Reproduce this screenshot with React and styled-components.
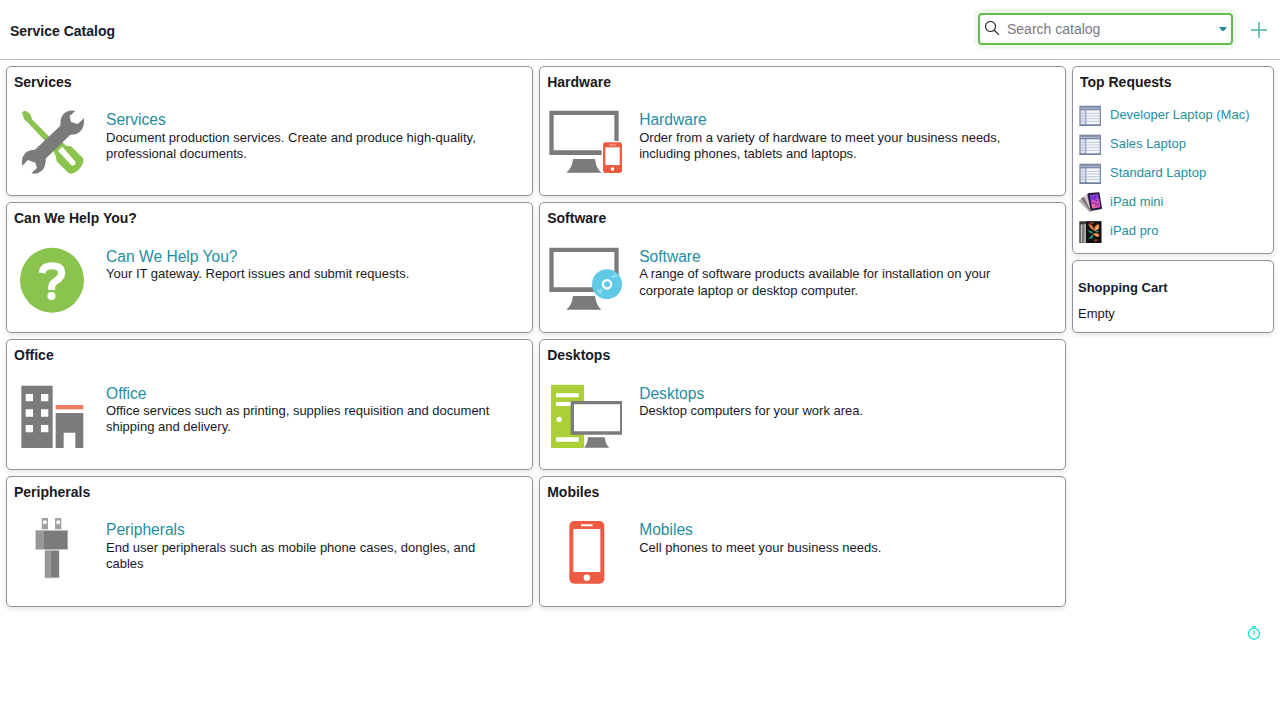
import React from 'react';
import styled, { createGlobalStyle } from 'styled-components';

const GlobalStyle = createGlobalStyle`
  * { box-sizing: border-box; }
  body {
    margin: 0;
    background: #fff;
    color: #181a1f;
    font-family: "Liberation Sans", Arial, sans-serif;
    font-size: 13px;
    overflow: hidden;
  }
`;

const Page = styled.div`
  width: 1280px;
  height: 718px;
`;

const Header = styled.header`
  display: flex;
  align-items: center;
  justify-content: space-between;
  height: 60px;
  padding: 0 12px 2px 10px;
  border-bottom: 1px solid #b9b9bb;
`;

const PageTitle = styled.h1`
  margin: 0;
  padding-top: 4px;
  font-size: 14px;
  line-height: 18px;
`;

const HeaderTools = styled.div`
  display: flex;
  align-items: center;
  gap: 17px;
`;

const SearchField = styled.label`
  display: flex;
  align-items: center;
  width: 255px;
  height: 32px;
  padding: 0 4px 0 5px;
  border: 2px solid #65bd4f;
  border-radius: 4px;
  box-shadow: 0 0 0 4px #f0f9ee;
`;

const SearchInput = styled.input`
  flex: 1;
  min-width: 0;
  margin: 0 0 0 7px;
  padding: 0;
  border: 0;
  outline: 0;
  background: transparent;
  font: 14px "Liberation Sans", Arial, sans-serif;
  color: #181a1f;
  &::placeholder { color: #777984; opacity: 1; }
`;

const SearchGlyph = styled.svg`
  width: 15px;
  height: 16px;
`;

const AddGlyph = styled.svg`
  width: 18px;
  height: 18px;
  margin-top: 2px;
`;

const Columns = styled.main`
  display: grid;
  grid-template-columns: 1060px 202px;
  align-items: start;
  gap: 6px;
  padding: 5.8px 6px;
`;

const Catalog = styled.div`
  display: grid;
  grid-template-columns: 527.2px 526.8px;
  grid-template-rows: repeat(4, 130.69px);
  gap: 6px;
`;

const Sidebar = styled.aside`
  display: grid;
  grid-template-rows: 188px 73px;
  gap: 6px;
`;

const Card = styled.section`
  border: 1px solid #8f92a1;
  border-radius: 5px;
  background: #fff;
  box-shadow: 0 2px 5px rgba(24, 26, 31, 0.12);
`;

const CardTitle = styled.h2`
  margin: 0;
  padding: 6px 7px 0;
  font-size: 14px;
  line-height: 18px;
`;

const CardBody = styled.div`
  display: flex;
  gap: 8px;
  padding: 15px 7px 0;
`;

const CategoryIcon = styled.svg`
  flex: none;
  width: 84px;
  height: 80px;
`;

const CategoryText = styled.div`
  width: 400px;
  padding-top: 4.4px;
`;

const Link = styled.a`
  display: block;
  color: #278ea0;
  text-decoration: none;
  font-size: ${(p) => (p.$large ? '15.6px' : '13px')};
  line-height: ${(p) => (p.$large ? '19.5px' : '18px')};
`;

const Description = styled.p`
  margin: 0.1px 0 0;
  line-height: 16.25px;
`;

const RequestList = styled.ul`
  margin: 0;
  padding: 12px 0 0 5px;
  list-style: none;
`;

const Request = styled.li`
  display: flex;
  gap: 7px;
  height: 29px;
`;

const Thumb = styled.svg`
  flex: none;
  width: 25px;
  height: 25px;
`;

const RequestLabel = styled.div`
  padding-top: 3px;
`;

const CartTitle = styled.h3`
  margin: 19px 5px 0;
  font-size: 13px;
  line-height: 16px;
`;

const CartText = styled.p`
  margin: 10px 5px 0;
  line-height: 16px;
`;

const TimerButton = styled.svg`
  position: fixed;
  left: 1247px;
  top: 625px;
  width: 14px;
  height: 16px;
`;

const gray = '#7b7b7b';

const ServicesIcon = () => (
  <CategoryIcon viewBox="42 168 252 240">
    <path fill="#8bc34f" d="M66 188L70 184L77 182L91 192L96 208L172 284L158 298L82 216L73 209Z" />
    <path fill="#8bc34f" d="M160 302L187 276L198 287L213 289L246 321Q253 329 249 339Q241 359 222 369Q211 374 203 367L170 334L168 320Z" />
    <path fill="#fff" d="M180 296L187 290L225 334Q229 340 224 345Q218 349 213 344L174 303Z" />
    <path fill={gray} d="M226 183Q210 178 195 188Q180 198 181 227L105 299Q79 299 70 318Q63 332 67 347L84 330L106 338L111 354L94 370Q113 375 128 359Q138 348 137 326L211 254Q236 255 247 236Q254 222 252 205L233 222L213 216L209 198Z" />
  </CategoryIcon>
);

const HelpIcon = () => (
  <CategoryIcon viewBox="42 156 252 240">
    <ellipse cx="156" cy="270.500" rx="96" ry="97.500" fill="#8bc34f" />
    <path d="M126 249Q129 227 155 227Q185 227 185 250Q185 261 172 270Q155 280 155 291V300" fill="none" stroke="#fff" strokeWidth="21" />
    <circle cx="154.500" cy="318" r="12" fill="#fff" />
  </CategoryIcon>
);

const OfficeIcon = () => (
  <CategoryIcon viewBox="42 132 252 240">
    <path fill={gray} fillRule="evenodd" d="M64 152H158V339H64ZM77 177V199H99V177ZM123 177V199H145V177ZM77 223V245H99V223ZM123 223V245H145V223ZM77 270V292H99V270ZM123 270V292H145V270Z" />
    <path fill="#f57f62" d="M167 210H250V223H167Z" />
    <path fill={gray} d="M167 234H250V339H226V293H191V339H167Z" />
  </CategoryIcon>
);

const PeripheralsIcon = () => (
  <CategoryIcon viewBox="42 153 252 240">
    <path fill="#a2a2a2" d="M125 159H144V193H125ZM165 159H184V193H165Z" />
    <circle cx="134.500" cy="172" r="6" fill="#fff" />
    <circle cx="174.500" cy="172" r="6" fill="#fff" />
    <path fill="#bdbdbd" d="M106 195H204V254H178V340H134V254H106Z" />
    <path fill={gray} d="M109 198H202V252H109ZM136 258H177V337H136Z" />
    <path fill="#999" d="M109 198H132V252H109ZM136 258H153V337H136Z" />
  </CategoryIcon>
);

const Monitor = ({ y = 0 }) => (
  <g transform={`translate(0 ${y})`}>
    <path fill={gray} fillRule="evenodd" d="M73 152H281V285H73ZM86 165V271H268V165Z" />
    <path fill={gray} d="M144 297H210Q214 327 229 338H124Q142 323 144 297Z" />
  </g>
);

const HardwareIcon = () => (
  <CategoryIcon viewBox="66 138 252 240">
    <Monitor />
    <rect x="230" y="243" width="66" height="100" rx="9" fill="#fff" />
    <rect x="234" y="247" width="57" height="92" rx="8" fill="#ec5b42" />
    <rect x="241" y="262" width="43" height="53" fill="#fff" />
    <path d="M252 255H273" stroke="#f8b5a9" strokeWidth="3" />
    <circle cx="262.500" cy="327" r="5" fill="#fff" />
  </CategoryIcon>
);

const SoftwareIcon = () => (
  <CategoryIcon viewBox="66 156 252 240">
    <Monitor y={21} />
    <circle cx="246" cy="282.500" r="45" fill="#61c9e6" />
    <path fill="#8cdbee" d="M258 262L270 248L280 263L262 263ZM234 300L225 316L214 301L228 296Z" />
    <circle cx="246" cy="283" r="12.500" fill="#61c9e6" stroke="#fff" strokeWidth="7" />
  </CategoryIcon>
);

const DesktopsIcon = () => (
  <CategoryIcon viewBox="66 147 252 240">
    <rect x="78" y="164" width="99" height="190" rx="3" fill="#abd037" />
    <path fill="#fff" d="M93 190H161V202H93ZM93 216H161V228H93ZM93 322H161V335H93Z" />
    <circle cx="102.500" cy="268" r="8" fill="#fff" />
    <path fill="#fff" d="M177 208H180V319H177Z" />
    <path fill={gray} d="M137 213H291V314H137Z" />
    <path fill="#fff" d="M147 223H285V304H147Z" />
    <path fill={gray} d="M189 322H239Q242 345 253 353H177Q188 342 189 322Z" />
  </CategoryIcon>
);

const MobilesIcon = () => (
  <CategoryIcon viewBox="66 153 252 240">
    <rect x="133" y="168" width="105" height="188" rx="15" fill="#ec5b42" />
    <rect x="145" y="192" width="81" height="129" fill="#fff" />
    <rect x="168" y="178" width="35" height="6" rx="2" fill="#fff" />
    <circle cx="185.500" cy="338" r="9.500" fill="#fff" />
  </CategoryIcon>
);

const FormThumb = () => (
  <Thumb viewBox="0 0 75 75">
    <path fill="#7d8aa8" d="M4 8H69V68H4Z" />
    <path fill="#a9b3c8" d="M7 14H66V18H7Z" />
    <path fill="#dbe2ee" d="M8 22H22V64H8Z" />
    <path fill="#f5f7fb" d="M25 22H65V64H25Z" />
    <path d="M8 31H65M8 39H65M8 47H65M8 55H65" stroke="#b3bfcf" strokeWidth="2.500" />
    <path d="M4 67H69" stroke="#61779d" strokeWidth="3" />
  </Thumb>
);

const MiniThumb = () => (
  <Thumb viewBox="0 0 75 75">
    <path fill="#b6afad" d="M1 32L20 21L42 64L35 66Z" />
    <path fill="#7d7477" d="M9 25L23 17L44 63L36 64Z" />
    <path fill="#d7c8c7" d="M17 19L31 12L45 61L38 62Z" />
    <path fill="#958cae" d="M26 13L35 8L48 60L39 60Z" />
    <path fill="#211a36" d="M29 12Q30 9 34 9L64 7L72 54Q72 58 68 58L42 62Q38 62 37 58Z" />
    <path fill="#8a3fe0" d="M35 15L60 12L67 52L43 56Z" />
    <path fill="#d54cc5" d="M38 32L63 25L67 51L46 54Z" />
    <path fill="#fa689e" d="M40 44L56 38L59 52L43 55Z" />
    <path d="M37 24L54 19L48 28L61 34M43 38L62 43L49 49" fill="none" stroke="#5b2aa8" strokeWidth="2.500" />
  </Thumb>
);

const ProThumb = () => (
  <Thumb viewBox="0 0 75 75">
    <path fill="#353638" d="M4 7H70V72H4Z" />
    <path fill="#c5c5c5" d="M8 16H13V71H8Z" />
    <path fill="#858688" d="M13 15H20V71H13Z" />
    <path fill="#f2f2f2" d="M20 14H23V72H20Z" />
    <path fill="#11100f" d="M24 7H70V72H24Z" />
    <path fill="#a43627" d="M30 12L48 9L44 17ZM48 61L64 62L50 69Z" />
    <path fill="#e87b42" d="M31 16Q44 13 49 35Q36 30 31 16ZM48 37Q47 16 63 16Q68 33 48 37ZM44 44Q62 38 65 50Q56 60 44 44Z" />
    <path fill="#ffc58b" d="M51 33L61 19L60 31ZM50 45L61 49L56 52Z" />
    <path fill="#279d7c" d="M27 32L46 39L39 44ZM31 60L45 44L44 58ZM50 37L64 35L58 41Z" />
  </Thumb>
);

const categories = [
  { name: 'Services', Icon: ServicesIcon, text: 'Document production services. Create and produce high-quality, professional documents.' },
  { name: 'Hardware', Icon: HardwareIcon, text: 'Order from a variety of hardware to meet your business needs, including phones, tablets and laptops.' },
  { name: 'Can We Help You?', Icon: HelpIcon, text: 'Your IT gateway. Report issues and submit requests.' },
  { name: 'Software', Icon: SoftwareIcon, text: 'A range of software products available for installation on your corporate laptop or desktop computer.' },
  { name: 'Office', Icon: OfficeIcon, text: 'Office services such as printing, supplies requisition and document shipping and delivery.' },
  { name: 'Desktops', Icon: DesktopsIcon, text: 'Desktop computers for your work area.' },
  { name: 'Peripherals', Icon: PeripheralsIcon, text: 'End user peripherals such as mobile phone cases, dongles, and cables' },
  { name: 'Mobiles', Icon: MobilesIcon, text: 'Cell phones to meet your business needs.' },
];

const requests = [
  { name: 'Developer Laptop (Mac)', Icon: FormThumb },
  { name: 'Sales Laptop', Icon: FormThumb },
  { name: 'Standard Laptop', Icon: FormThumb },
  { name: 'iPad mini', Icon: MiniThumb },
  { name: 'iPad pro', Icon: ProThumb },
];

export default function App() {
  return (
    <Page>
      <GlobalStyle />
      <Header>
        <PageTitle>Service Catalog</PageTitle>
        <HeaderTools>
          <SearchField>
            <SearchGlyph viewBox="0 0 15 16" fill="none" stroke="#20242b" strokeWidth="1.1">
              <circle cx="5.500" cy="5.500" r="5" />
              <path d="M9 9L14 13.800" />
            </SearchGlyph>
            <SearchInput placeholder="Search catalog" />
            <svg width="8" height="4" viewBox="0 0 8 4"><path d="M0 0H8L5 4H3Z" fill="#278ea0" /></svg>
          </SearchField>
          <AddGlyph viewBox="0 0 18 18" stroke="#48b8a5" strokeWidth="1.500">
            <path d="M9 1V17M1 9H17" />
          </AddGlyph>
        </HeaderTools>
      </Header>
      <Columns>
        <Catalog>
          {categories.map(({ name, Icon, text }) => (
            <Card key={name}>
              <CardTitle>{name}</CardTitle>
              <CardBody>
                <Icon />
                <CategoryText>
                  <Link $large href="#">{name}</Link>
                  <Description>{text}</Description>
                </CategoryText>
              </CardBody>
            </Card>
          ))}
        </Catalog>
        <Sidebar>
          <Card>
            <CardTitle>Top Requests</CardTitle>
            <RequestList>
              {requests.map(({ name, Icon }) => (
                <Request key={name}>
                  <Icon />
                  <RequestLabel>
                    <Link href="#">{name}</Link>
                  </RequestLabel>
                </Request>
              ))}
            </RequestList>
          </Card>
          <Card>
            <CartTitle>Shopping Cart</CartTitle>
            <CartText>Empty</CartText>
          </Card>
        </Sidebar>
      </Columns>
      <TimerButton viewBox="0 0 14 16" fill="none" stroke="#29e5d3" strokeWidth="1.400">
        <circle cx="7" cy="8.700" r="5.500" />
        <path d="M5 1.700H9M7 2V4M7 5.500V9.500" />
      </TimerButton>
    </Page>
  );
}
